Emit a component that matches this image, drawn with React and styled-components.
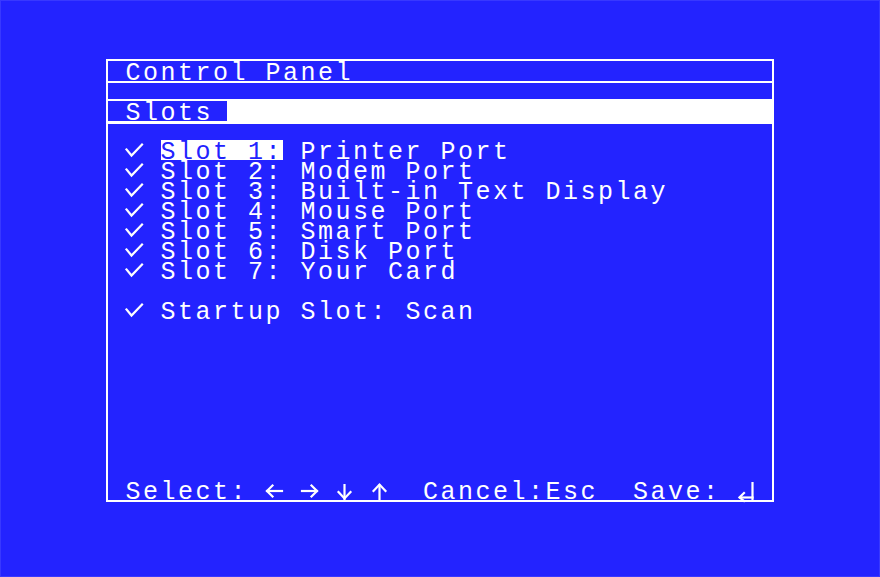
import React from 'react';
import styled, { createGlobalStyle } from 'styled-components';

const BLUE = '#2323ff';
const WHITE = '#ffffff';
const CELL = 17.5;

const GlobalStyle = createGlobalStyle`
  html, body {
    margin: 0;
    padding: 0;
    background: ${BLUE};
  }
  body {
    font-family: "Liberation Mono", "DejaVu Sans Mono", monospace;
  }
`;

const Screen = styled.div`
  width: 880px;
  height: 577px;
  box-sizing: border-box;
  background: ${BLUE};
  border: 1px solid #3838ff;
  padding: 58px 0 0 105px;
`;

const Panel = styled.section`
  width: 668px;
  height: 443px;
  box-sizing: border-box;
  border: 2px solid ${WHITE};
  display: flex;
  flex-direction: column;
`;

const Row = styled.div`
  height: 20px;
  line-height: 25px;
  font-size: 25px;
  letter-spacing: 2.5px;
  white-space: pre;
  color: ${WHITE};
  padding-left: ${CELL}px;
  margin-top: ${p => p.$gap || 0}px;
  flex-shrink: 0;
`;

const TitleRow = styled(Row)`
  border-bottom: 2px solid ${WHITE};
`;

const TabBar = styled.div`
  margin-top: 16px;
  height: 25px;
  box-sizing: border-box;
  padding-top: 2px;
  background: ${WHITE};
  flex-shrink: 0;
`;

const Tab = styled(Row)`
  width: 119px;
  box-sizing: border-box;
  background: ${BLUE};
`;

const List = styled.div`
  margin-top: 16px;
  display: flex;
  flex-direction: column;
`;

const Highlight = styled.span`
  display: inline-block;
  height: 20px;
  vertical-align: top;
  background: ${p => (p.$on ? WHITE : 'transparent')};
  color: ${p => (p.$on ? BLUE : WHITE)};
`;

const Footer = styled(Row)`
  margin-top: auto;
`;

const Glyph = styled.svg`
  display: inline-block;
  width: ${CELL}px;
  height: 20px;
  vertical-align: top;
  overflow: visible;
`;

const line = { stroke: WHITE, strokeWidth: 2.2, fill: 'none', strokeLinecap: 'square' };

const Check = () => (
  <Glyph viewBox="0 0 17.5 20">
    <polyline points="0.5,9.5 5.5,15.5 16,4.5" {...line} />
  </Glyph>
);

const ArrowLeft = () => (
  <Glyph viewBox="0 0 17.5 20">
    <polyline points="1,11 16,11" {...line} />
    <polyline points="6.5,5.5 1,11 6.5,16.5" {...line} />
  </Glyph>
);

const ArrowRight = () => (
  <Glyph viewBox="0 0 17.5 20">
    <polyline points="1,11 16,11" {...line} />
    <polyline points="10.5,5.5 16,11 10.5,16.5" {...line} />
  </Glyph>
);

const ArrowDown = () => (
  <Glyph viewBox="0 0 17.5 20">
    <line x1="8.5" y1="4" x2="8.5" y2="20" {...line} strokeLinecap="butt" />
    <polyline points="2.5,12 8.5,18.5 14.5,12" {...line} />
  </Glyph>
);

const ArrowUp = () => (
  <Glyph viewBox="0 0 17.5 20">
    <line x1="8.5" y1="4.5" x2="8.5" y2="20" {...line} strokeLinecap="butt" />
    <polyline points="2.5,11 8.5,4.5 14.5,11" {...line} />
  </Glyph>
);

const Return = () => (
  <Glyph viewBox="0 0 17.5 20">
    <line x1="14.5" y1="2" x2="14.5" y2="20" {...line} strokeLinecap="butt" />
    <polyline points="2,17.5 14.5,17.5" {...line} />
    <polyline points="6,13 1.5,17.5 6,21" {...line} />
  </Glyph>
);

const slots = [
  'Printer Port',
  'Modem Port',
  'Built-in Text Display',
  'Mouse Port',
  'Smart Port',
  'Disk Port',
  'Your Card',
];

export default function App() {
  return (
    <>
      <GlobalStyle />
      <Screen>
        <Panel>
          <TitleRow>Control Panel</TitleRow>
          <TabBar>
            <Tab>Slots</Tab>
          </TabBar>
          <List>
            {slots.map((name, i) => (
              <Row key={name}>
                <Check /> <Highlight $on={i === 0}>{`Slot ${i + 1}:`}</Highlight> {name}
              </Row>
            ))}
          </List>
          <Row $gap={20}>
            <Check /> Startup Slot: Scan
          </Row>
          <Footer>
            {'Select: '}
            <ArrowLeft /> <ArrowRight /> <ArrowDown /> <ArrowUp />
            {'  Cancel:Esc  Save: '}
            <Return />
          </Footer>
        </Panel>
      </Screen>
    </>
  );
}
